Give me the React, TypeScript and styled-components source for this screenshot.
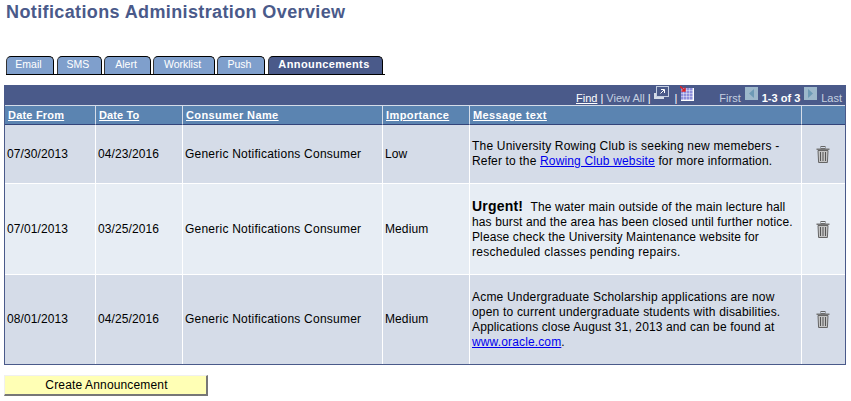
import React from "react";
import styled, { createGlobalStyle } from "styled-components";

const GlobalStyle = createGlobalStyle`
  html, body {
    margin: 0;
    padding: 0;
    background: #ffffff;
    font-family: "Liberation Sans", Arial, sans-serif;
  }
`;

const Page = styled.div`
  display: flex;
  flex-direction: column;
  width: 851px;
  height: 401px;
  overflow: hidden;
  padding-top: 1px;
  box-sizing: border-box;
`;

const Title = styled.h1`
  margin: 0 0 0 6px;
  height: 55px;
  font-size: 18px;
  line-height: 22px;
  letter-spacing: 0.38px;
  font-weight: bold;
  color: #4a5a8a;
`;

const TabBar = styled.div`
  display: flex;
  margin-left: 6px;
  width: 379px;
  height: 19px;
  box-sizing: border-box;
  border-bottom: 1px solid #000000;
`;

const Tab = styled.div<{ $width: number; $gap: number; $active?: boolean }>`
  width: ${(p) => p.$width}px;
  margin-right: ${(p) => p.$gap}px;
  height: 18px;
  padding-right: 3px;
  box-sizing: border-box;
  border: 1px solid #000000;
  border-bottom: 0;
  border-left-color: #333333;
  border-radius: 5px 5px 0 0;
  background: ${(p) => (p.$active ? "#4a5a8a" : "#7f9fcc")};
  color: #ffffff;
  font-size: ${(p) => (p.$active ? "11px" : "10.5px")};
  font-weight: ${(p) => (p.$active ? "bold" : "normal")};
  letter-spacing: ${(p) => (p.$active ? "0.4px" : "0")};
  line-height: 15px;
  text-align: center;
`;

const Grid = styled.table`
  margin: 10px 0 0 4px;
  width: 842px;
  border-collapse: separate;
  border-spacing: 0;
  table-layout: fixed;
  border: 1px solid #4a5a8a;
  border-top: 0;
  font-size: 12px;
  color: #000000;
`;

const NavCell = styled.td`
  height: 20px;
  padding: 0;
  background: #4a5a8a;
  border-bottom: 1px solid #d5dce8;
`;

const NavBar = styled.div`
  display: flex;
  align-items: flex-end;
  justify-content: flex-end;
  height: 20px;
  box-sizing: border-box;
  padding: 0 3px 1px 0;
  font-size: 11px;
  color: #c5d0e0;
  white-space: nowrap;
`;

const NavLink = styled.a`
  color: #ffffff;
  text-decoration: underline;
`;

const NavSep = styled.span`
  color: #ffffff;
  margin: 0 3px;
`;

const NavCount = styled.span`
  color: #ffffff;
  font-weight: bold;
  margin: 0 4px;
`;

const NavIcon = styled.span<{ $bottom: number; $right?: number; $left?: number }>`
  display: inline-flex;
  margin: 0 ${(p) => p.$right ?? 0}px ${(p) => p.$bottom}px ${(p) => p.$left ?? 0}px;
`;

const PagerLabel = styled.span`
  margin-right: 4px;
`;

const LastLabel = styled.span`
  margin-left: 4px;
`;

const HeadCell = styled.th<{ $spacing: number }>`
  height: 19px;
  padding: 0 3px;
  box-sizing: border-box;
  background: #5b84b1;
  border-right: 1px solid #d5dce8;
  border-bottom: 1px solid #33447a;
  text-align: left;
  font-size: 11px;
  letter-spacing: ${(p) => p.$spacing}px;
  font-weight: bold;
  color: #ffffff;
  text-decoration: underline;
  &:last-child {
    border-right: 0;
  }
`;

const Row = styled.tr<{ $height: number; $alt?: boolean }>`
  height: ${(p) => p.$height}px;
  background: ${(p) => (p.$alt ? "#e7edf4" : "#d5dce8")};
`;

const Cell = styled.td<{ $spacing?: number }>`
  padding: 0 3px 0 2px;
  border-right: 1px solid #ffffff;
  border-bottom: 1px solid #ffffff;
  line-height: 15px;
  letter-spacing: ${(p) => p.$spacing ?? 0.1}px;
  vertical-align: middle;
  &:last-child {
    border-right: 0;
    text-align: center;
  }
  tr:last-child > & {
    border-bottom: 0;
  }
`;

const MessageLine = styled.span<{ $spacing: number }>`
  display: block;
  white-space: nowrap;
  letter-spacing: ${(p) => p.$spacing}px;
`;

const Strong = styled.b`
  font-size: 14px;
  letter-spacing: 0.2px;
  margin-right: 4px;
`;

const TextLink = styled.a`
  color: #0000ee;
  text-decoration: underline;
`;

const PrimaryButton = styled.button`
  width: 204px;
  height: 21px;
  margin: 10px 0 0 4px;
  padding: 0 0 0 2px;
  box-sizing: border-box;
  background: #ffffb5;
  border: 0;
  border-top: 1px solid #f0f0f0;
  border-left: 1px solid #f0f0f0;
  border-right: 2px solid #777777;
  border-bottom: 2px solid #777777;
  font-family: "Liberation Sans", Arial, sans-serif;
  font-size: 12px;
  letter-spacing: 0.15px;
  color: #000000;
`;

const TrashIcon = () => (
  <svg width="14" height="17" viewBox="0 0 14 17" style={{ display: "block", margin: "0 auto" }}>
    <rect x="5" y="0.5" width="4" height="2" fill="none" stroke="#666666" />
    <rect x="0.5" y="2.5" width="13" height="1.5" fill="#777777" />
    <path d="M2 4.5h10l-.6 12h-8.8z" fill="#c4c4c4" stroke="#666666" />
    <path d="M4.5 6v9M7 6v9M9.5 6v9" stroke="#555555" />
  </svg>
);

const DownloadIcon = () => (
  <svg width="15" height="13" viewBox="0 0 15 13">
    <rect x="0" y="7" width="10" height="6" fill="#d5dce8" />
    <rect x="2" y="0" width="13" height="11" fill="#c3cde0" />
    <rect x="3" y="1" width="11" height="9" fill="#4a5a8a" />
    <path d="M6.5 7.5l3.5-3.5M7 3.5h3.5v3.5" stroke="#ffffff" fill="none" />
  </svg>
);

const GridIcon = () => (
  <svg width="14" height="15" viewBox="0 0 14 15">
    <rect x="1" y="2" width="13" height="13" fill="#ffffff" />
    {[2, 5, 8, 11].map((y) =>
      [1, 4, 7, 10].map((x) => (
        <rect key={`${x}-${y}`} x={x} y={y} width="2.6" height="2.6" fill="#8f90dc" />
      ))
    )}
    <path d="M0 0l5 5M5 1.5V5H1.5" stroke="#e02020" strokeWidth="1.4" fill="none" />
  </svg>
);

const PagerArrow = ({ dir }: { dir: "left" | "right" }) => (
  <svg width="13" height="13" viewBox="0 0 13 13">
    <rect width="13" height="13" fill="#9db8cb" />
    <path d={dir === "left" ? "M9 2v9L4 6.5z" : "M4 2v9l5-4.5z"} fill="#6d9ab5" />
  </svg>
);

const tabs = [
  { label: "Email", width: 48, gap: 3 },
  { label: "SMS", width: 45, gap: 2 },
  { label: "Alert", width: 47, gap: 2 },
  { label: "Worklist", width: 62, gap: 2 },
  { label: "Push", width: 48, gap: 3 },
  { label: "Announcements", width: 115, gap: 0, active: true },
];

const columns = [
  { label: "Date From", width: 91, spacing: 0.2 },
  { label: "Date To", width: 87, spacing: 0.1 },
  { label: "Consumer Name", width: 200, spacing: 0.4 },
  { label: "Importance", width: 87, spacing: 0.4 },
  { label: "Message text", width: 332, spacing: 0.4 },
  { label: "", width: 43, spacing: 0 },
];

const App = () => {
  return (
    <Page>
      <GlobalStyle />
      <Title>Notifications Administration Overview</Title>
      <TabBar>
        {tabs.map((tab) => (
          <Tab key={tab.label} $width={tab.width} $gap={tab.gap} $active={tab.active}>
            {tab.label}
          </Tab>
        ))}
      </TabBar>
      <Grid>
        <colgroup>
          {columns.map((col, i) => (
            <col key={i} width={col.width} />
          ))}
        </colgroup>
        <thead>
          <tr>
            <NavCell colSpan={6}>
              <NavBar>
                <NavLink>Find</NavLink>
                <NavSep>|</NavSep>
                View All
                <NavSep>|</NavSep>
                <NavIcon $bottom={5} $left={1} $right={2}>
                  <DownloadIcon />
                </NavIcon>
                <NavSep>|</NavSep>
                <NavIcon $bottom={3} $right={25}>
                  <GridIcon />
                </NavIcon>
                <PagerLabel>First</PagerLabel>
                <NavIcon $bottom={4}>
                  <PagerArrow dir="left" />
                </NavIcon>
                <NavCount>1-3 of 3</NavCount>
                <NavIcon $bottom={4}>
                  <PagerArrow dir="right" />
                </NavIcon>
                <LastLabel>Last</LastLabel>
              </NavBar>
            </NavCell>
          </tr>
          <tr>
            {columns.map((col, i) => (
              <HeadCell key={i} $spacing={col.spacing}>
                {col.label}
              </HeadCell>
            ))}
          </tr>
        </thead>
        <tbody>
          <Row $height={59}>
            <Cell>07/30/2013</Cell>
            <Cell>04/23/2016</Cell>
            <Cell $spacing={0.23}>Generic Notifications Consumer</Cell>
            <Cell>Low</Cell>
            <Cell>
              <MessageLine $spacing={0.19}>The University Rowing Club is seeking new memebers -</MessageLine>
              <MessageLine $spacing={0.15}>
                Refer to the <TextLink>Rowing Club website</TextLink> for more information.
              </MessageLine>
            </Cell>
            <Cell>
              <TrashIcon />
            </Cell>
          </Row>
          <Row $height={91} $alt>
            <Cell>07/01/2013</Cell>
            <Cell>03/25/2016</Cell>
            <Cell $spacing={0.23}>Generic Notifications Consumer</Cell>
            <Cell>Medium</Cell>
            <Cell>
              <MessageLine $spacing={0.13}>
                <Strong>Urgent!</Strong> The water main outside of the main lecture hall
              </MessageLine>
              <MessageLine $spacing={0.13}>has burst and the area has been closed until further notice.</MessageLine>
              <MessageLine $spacing={0.12}>Please check the University Maintenance website for</MessageLine>
              <MessageLine $spacing={0.29}>rescheduled classes pending repairs.</MessageLine>
            </Cell>
            <Cell>
              <TrashIcon />
            </Cell>
          </Row>
          <Row $height={89}>
            <Cell>08/01/2013</Cell>
            <Cell>04/25/2016</Cell>
            <Cell $spacing={0.23}>Generic Notifications Consumer</Cell>
            <Cell>Medium</Cell>
            <Cell>
              <MessageLine $spacing={0.19}>Acme Undergraduate Scholarship applications are now</MessageLine>
              <MessageLine $spacing={0.19}>open to current undergraduate students with disabilities.</MessageLine>
              <MessageLine $spacing={0.13}>Applications close August 31, 2013 and can be found at</MessageLine>
              <MessageLine $spacing={0.14}>
                <TextLink>www.oracle.com</TextLink>.
              </MessageLine>
            </Cell>
            <Cell>
              <TrashIcon />
            </Cell>
          </Row>
        </tbody>
      </Grid>
      <PrimaryButton>Create Announcement</PrimaryButton>
    </Page>
  );
};

export default App;
